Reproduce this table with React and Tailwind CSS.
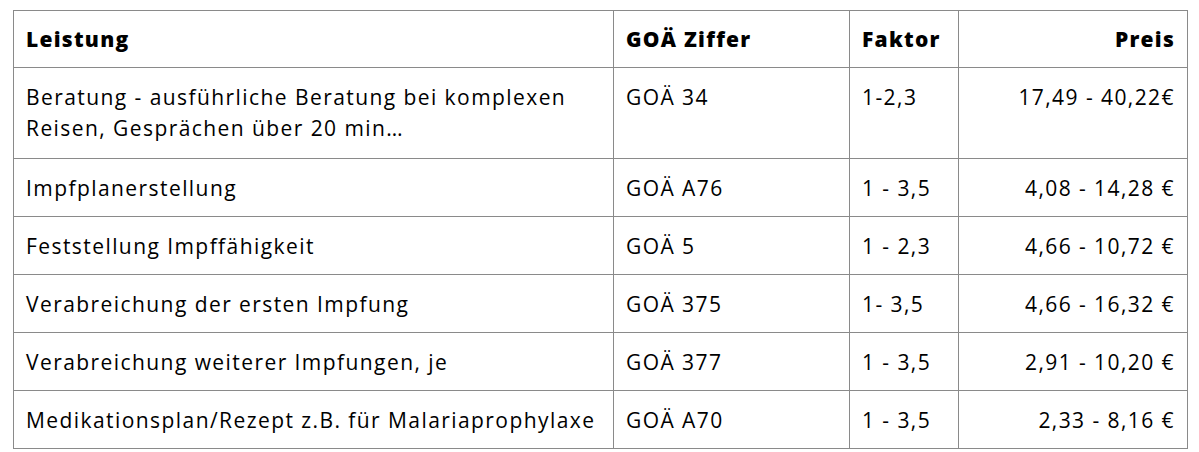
const rows = [
  ['Beratung - ausführliche Beratung bei komplexen Reisen, Gesprächen über 20 min…', 'GOÄ 34', '1-2,3', '17,49 - 40,22€'],
  ['Impfplanerstellung', 'GOÄ A76', '1 - 3,5', '4,08 - 14,28 €'],
  ['Feststellung Impffähigkeit', 'GOÄ 5', '1 - 2,3', '4,66 - 10,72 €'],
  ['Verabreichung der ersten Impfung', 'GOÄ 375', '1- 3,5', '4,66 - 16,32 €'],
  ['Verabreichung weiterer Impfungen, je', 'GOÄ 377', '1 - 3,5', '2,91 - 10,20 €'],
  ['Medikationsplan/Rezept z.B. für Malariaprophylaxe', 'GOÄ A70', '1 - 3,5', '2,33 - 8,16 €'],
]

export default function App() {
  return (
    <div className="w-[1199px] h-[452px] bg-white pt-[10px] pl-[13px]" style={{ fontFamily: '"Open Sans", "Noto Sans", sans-serif' }}>
      <table className="border-collapse table-fixed text-[21px] leading-[31px] tracking-[0.068em] text-black">
        <colgroup>
          <col className="w-[600px]" />
          <col className="w-[236px]" />
          <col className="w-[109px]" />
          <col className="w-[229px]" />
        </colgroup>
        <thead>
          <tr className="h-[57px]">
            <th className="border border-[#8a8a8a] px-3 text-left font-extrabold tracking-[0.06em]">Leistung</th>
            <th className="border border-[#8a8a8a] px-3 text-left font-extrabold tracking-[0.06em]">GOÄ Ziffer</th>
            <th className="border border-[#8a8a8a] px-3 text-left font-extrabold tracking-[0.06em]">Faktor</th>
            <th className="border border-[#8a8a8a] px-3 text-right font-extrabold tracking-[0.06em]">Preis</th>
          </tr>
        </thead>
        <tbody>
          {rows.map((r, i) => (
            <tr key={i} className={i === 0 ? 'h-[91px]' : 'h-[56px]'}>
              <td className={'border border-[#8a8a8a] pl-3 pr-1 pt-[14px] pb-3 align-top ' + (i === 0 ? '' : 'whitespace-nowrap')}>{r[0]}</td>
              <td className="border border-[#8a8a8a] px-3 pt-[14px] pb-3 align-top">{r[1]}</td>
              <td className="border border-[#8a8a8a] px-3 pt-[14px] pb-3 align-top">{r[2]}</td>
              <td className="border border-[#8a8a8a] px-3 pt-[14px] pb-3 align-top text-right whitespace-nowrap">{r[3]}</td>
            </tr>
          ))}
        </tbody>
      </table>
    </div>
  )
}
